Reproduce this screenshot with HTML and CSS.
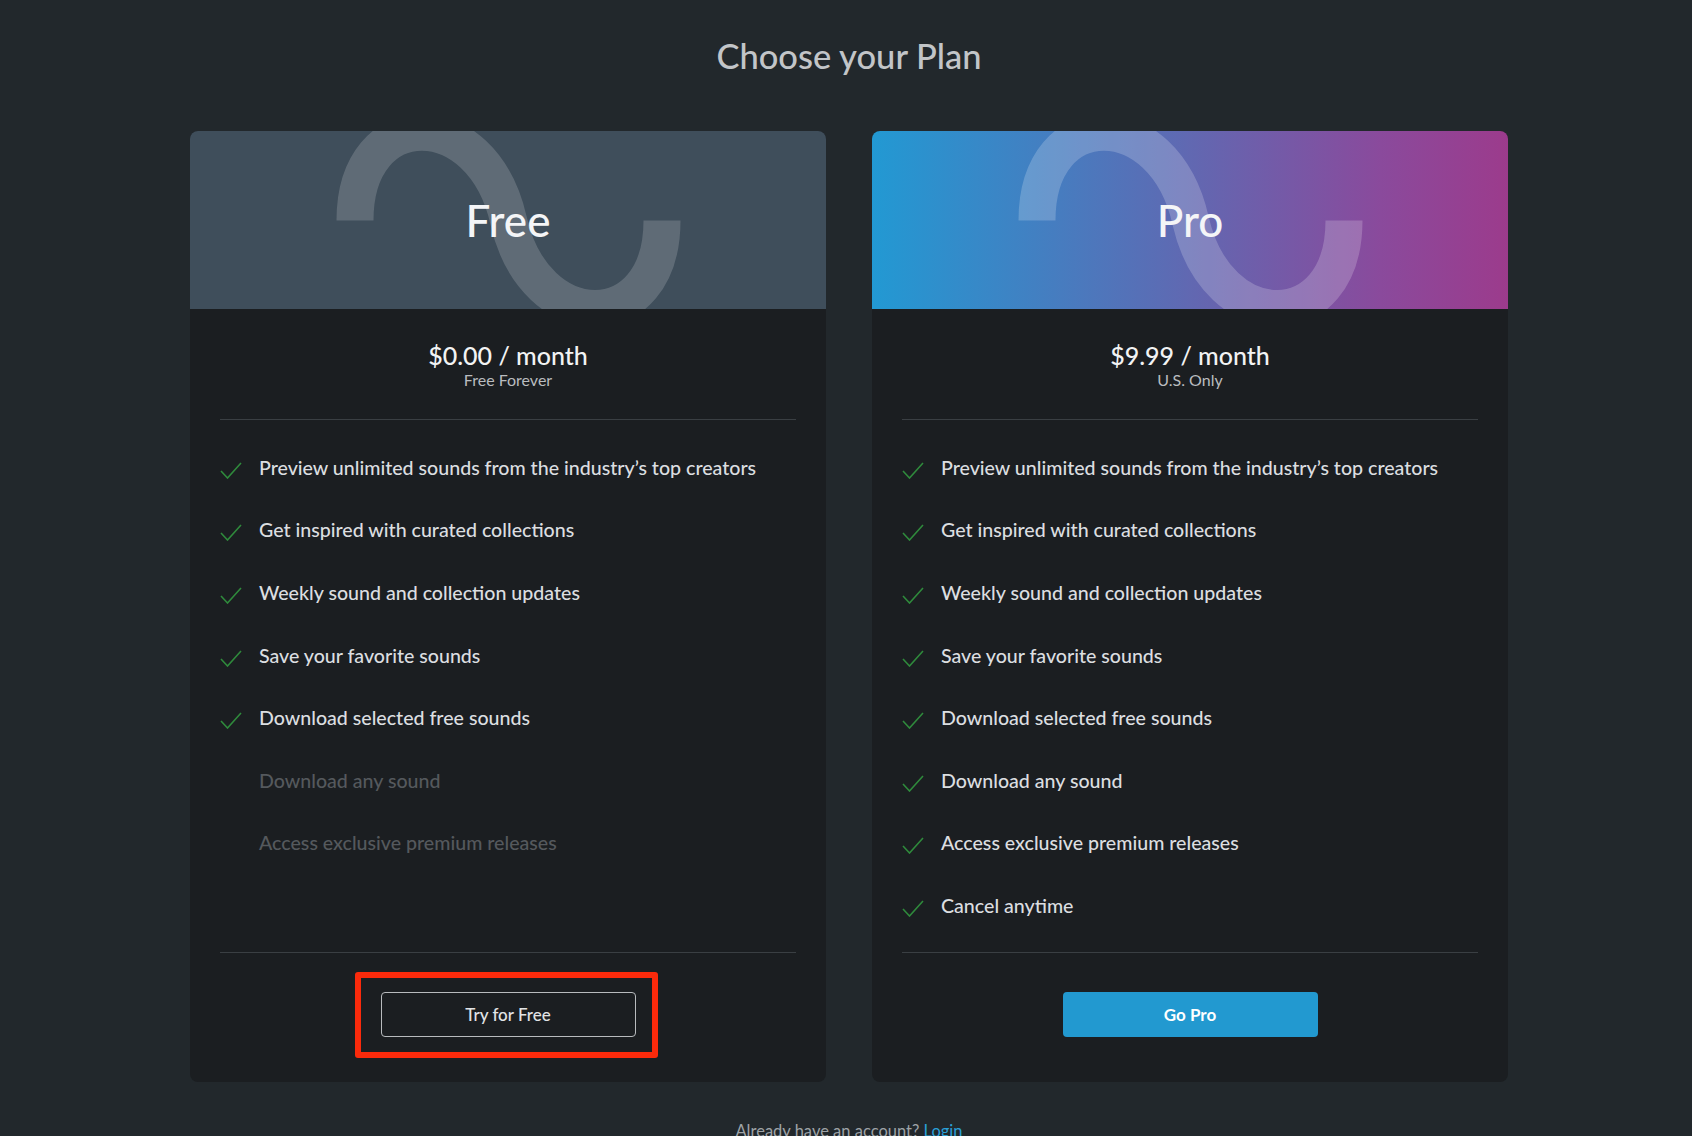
FILE: index.html
```html
<!DOCTYPE html>
<html lang="en">
<head>
<meta charset="utf-8">
<title>Choose your Plan</title>
<link rel="stylesheet" href="styles.css">
</head>
<body>
<main class="page">
  <h1 class="title">Choose your Plan</h1>
  <div class="plans">
    <section class="card">
      <header class="card-head head-free">
        <svg class="wave" viewBox="0 0 636 178" preserveAspectRatio="none" aria-hidden="true">
          <path d="M165 89.4 C165 -28 292 -28 318.5 89.4 C345 206.8 472 206.8 472 89.4" fill="none" stroke="rgba(255,255,255,0.17)" stroke-width="37"/>
        </svg>
        <h2 class="plan-name">Free</h2>
      </header>
      <div class="card-body">
        <div class="price">
          <div class="amount">$0.00 / month</div>
          <div class="note">Free Forever</div>
        </div>
        <ul class="features">
          <li class="feat"><svg class="check" viewBox="0 0 22 17"><path d="M1 9 L7.5 16 L21 1" fill="none" stroke="#2f8a3c" stroke-width="1.6"/></svg><span>Preview unlimited sounds from the industry’s top creators</span></li>
          <li class="feat"><svg class="check" viewBox="0 0 22 17"><path d="M1 9 L7.5 16 L21 1" fill="none" stroke="#2f8a3c" stroke-width="1.6"/></svg><span>Get inspired with curated collections</span></li>
          <li class="feat"><svg class="check" viewBox="0 0 22 17"><path d="M1 9 L7.5 16 L21 1" fill="none" stroke="#2f8a3c" stroke-width="1.6"/></svg><span>Weekly sound and collection updates</span></li>
          <li class="feat"><svg class="check" viewBox="0 0 22 17"><path d="M1 9 L7.5 16 L21 1" fill="none" stroke="#2f8a3c" stroke-width="1.6"/></svg><span>Save your favorite sounds</span></li>
          <li class="feat"><svg class="check" viewBox="0 0 22 17"><path d="M1 9 L7.5 16 L21 1" fill="none" stroke="#2f8a3c" stroke-width="1.6"/></svg><span>Download selected free sounds</span></li>
          <li class="feat off"><span class="check"></span><span>Download any sound</span></li>
          <li class="feat off"><span class="check"></span><span>Access exclusive premium releases</span></li>
        </ul>
        <div class="action">
          <div class="btn-wrap">
            <button class="btn btn-outline">Try for Free</button>
            <span class="highlight"></span>
          </div>
        </div>
      </div>
    </section>

    <section class="card">
      <header class="card-head head-pro">
        <svg class="wave" viewBox="0 0 636 178" preserveAspectRatio="none" aria-hidden="true">
          <path d="M165 89.4 C165 -28 292 -28 318.5 89.4 C345 206.8 472 206.8 472 89.4" fill="none" stroke="rgba(255,255,255,0.2)" stroke-width="37"/>
        </svg>
        <h2 class="plan-name">Pro</h2>
      </header>
      <div class="card-body">
        <div class="price">
          <div class="amount">$9.99 / month</div>
          <div class="note">U.S. Only</div>
        </div>
        <ul class="features">
          <li class="feat"><svg class="check" viewBox="0 0 22 17"><path d="M1 9 L7.5 16 L21 1" fill="none" stroke="#2f8a3c" stroke-width="1.6"/></svg><span>Preview unlimited sounds from the industry’s top creators</span></li>
          <li class="feat"><svg class="check" viewBox="0 0 22 17"><path d="M1 9 L7.5 16 L21 1" fill="none" stroke="#2f8a3c" stroke-width="1.6"/></svg><span>Get inspired with curated collections</span></li>
          <li class="feat"><svg class="check" viewBox="0 0 22 17"><path d="M1 9 L7.5 16 L21 1" fill="none" stroke="#2f8a3c" stroke-width="1.6"/></svg><span>Weekly sound and collection updates</span></li>
          <li class="feat"><svg class="check" viewBox="0 0 22 17"><path d="M1 9 L7.5 16 L21 1" fill="none" stroke="#2f8a3c" stroke-width="1.6"/></svg><span>Save your favorite sounds</span></li>
          <li class="feat"><svg class="check" viewBox="0 0 22 17"><path d="M1 9 L7.5 16 L21 1" fill="none" stroke="#2f8a3c" stroke-width="1.6"/></svg><span>Download selected free sounds</span></li>
          <li class="feat"><svg class="check" viewBox="0 0 22 17"><path d="M1 9 L7.5 16 L21 1" fill="none" stroke="#2f8a3c" stroke-width="1.6"/></svg><span>Download any sound</span></li>
          <li class="feat"><svg class="check" viewBox="0 0 22 17"><path d="M1 9 L7.5 16 L21 1" fill="none" stroke="#2f8a3c" stroke-width="1.6"/></svg><span>Access exclusive premium releases</span></li>
          <li class="feat"><svg class="check" viewBox="0 0 22 17"><path d="M1 9 L7.5 16 L21 1" fill="none" stroke="#2f8a3c" stroke-width="1.6"/></svg><span>Cancel anytime</span></li>
        </ul>
        <div class="action">
          <div class="btn-wrap">
            <button class="btn btn-primary">Go Pro</button>
          </div>
        </div>
      </div>
    </section>
  </div>
  <p class="footer">Already have an account? <a class="login" href="#">Login</a></p>
</main>
</body>
</html>
```

FILE: styles.css
```css
* { box-sizing: border-box; }

html, body {
  margin: 0;
  padding: 0;
  background: #22282c;
  height: 100%;
  overflow: hidden;
}

body {
  font-family: Lato, "Noto Sans", "Liberation Sans", sans-serif;
  color: #d9dbdd;
}

.page {
  padding: 36px 0 0 6px;
  display: flex;
  flex-direction: column;
  align-items: center;
}

.title {
  margin: 0;
  font-size: 34.5px;
  line-height: 40px;
  font-weight: 500;
  color: #c2c5c8;
}

.plans {
  margin-top: 55px;
  display: grid;
  grid-template-columns: 636px 636px;
  column-gap: 46px;
  align-items: stretch;
}

.card {
  background: #1b1e21;
  border-radius: 8px;
  overflow: hidden;
  display: flex;
  flex-direction: column;
  height: 951px;
}

.card-head {
  position: relative;
  height: 178px;
  display: flex;
  align-items: center;
  justify-content: center;
  overflow: hidden;
}

.head-free { background: #3f4e5b; }
.head-pro { background: linear-gradient(90deg, #2299d3 0%, #5a6db5 45%, #8a4a9c 80%, #9c3b8c 100%); }

.wave {
  position: absolute;
  left: 0;
  top: 0;
  width: 100%;
  height: 100%;
}

.plan-name {
  position: relative;
  margin: 0;
  font-size: 44px;
  font-weight: 500;
  color: #f4f5f7;
  line-height: 52px;
  margin-top: 0;
}

.card-body {
  flex: 1;
  display: flex;
  flex-direction: column;
  padding: 0 30px;
}

.price {
  text-align: center;
  padding: 31px 0 30px;
  border-bottom: 1px solid #3a3f43;
}

.amount {
  font-size: 25px;
  line-height: 30px;
  font-weight: 500;
  color: #f2f3f4;
}

.note {
  font-size: 16px;
  line-height: 19px;
  color: #b9bcbf;
}

.features {
  list-style: none;
  margin: 0;
  padding: 15px 0 0;
  flex: 1;
  border-bottom: 1px solid #3a3f43;
}

.feat {
  height: 62.6px;
  display: flex;
  align-items: center;
  font-size: 19.6px;
  font-weight: 500;
  color: #dcdee0;
  padding-top: 2px;
}

.feat.off { color: #55595d; }

.check {
  width: 22px;
  height: 17px;
  flex: none;
  margin-right: 17px;
  margin-top: 6px;
}

.action {
  display: flex;
  justify-content: center;
  padding: 39px 0 45px;
}

.btn-wrap {
  position: relative;
}

.btn {
  width: 255px;
  height: 45px;
  border-radius: 4px;
  font-family: Lato, "Noto Sans", "Liberation Sans", sans-serif;
  font-size: 17px;
  font-weight: 500;
  cursor: pointer;
}

.btn-outline {
  background: transparent;
  border: 1px solid #b8bbbe;
  color: #e2e4e6;
}

.btn-primary {
  background: #2299d0;
  border: none;
  color: #ffffff;
  font-weight: 700;
}

.highlight {
  position: absolute;
  left: -26px;
  right: -22px;
  top: -20px;
  bottom: -21px;
  border: 6px solid #fb2a0b;
  border-radius: 3px;
  pointer-events: none;
}

.footer {
  margin: 39px 0 0;
  font-size: 16.5px;
  line-height: 20px;
  color: #9ea3a7;
}

.login {
  color: #2aa0d8;
  text-decoration: none;
}
```
